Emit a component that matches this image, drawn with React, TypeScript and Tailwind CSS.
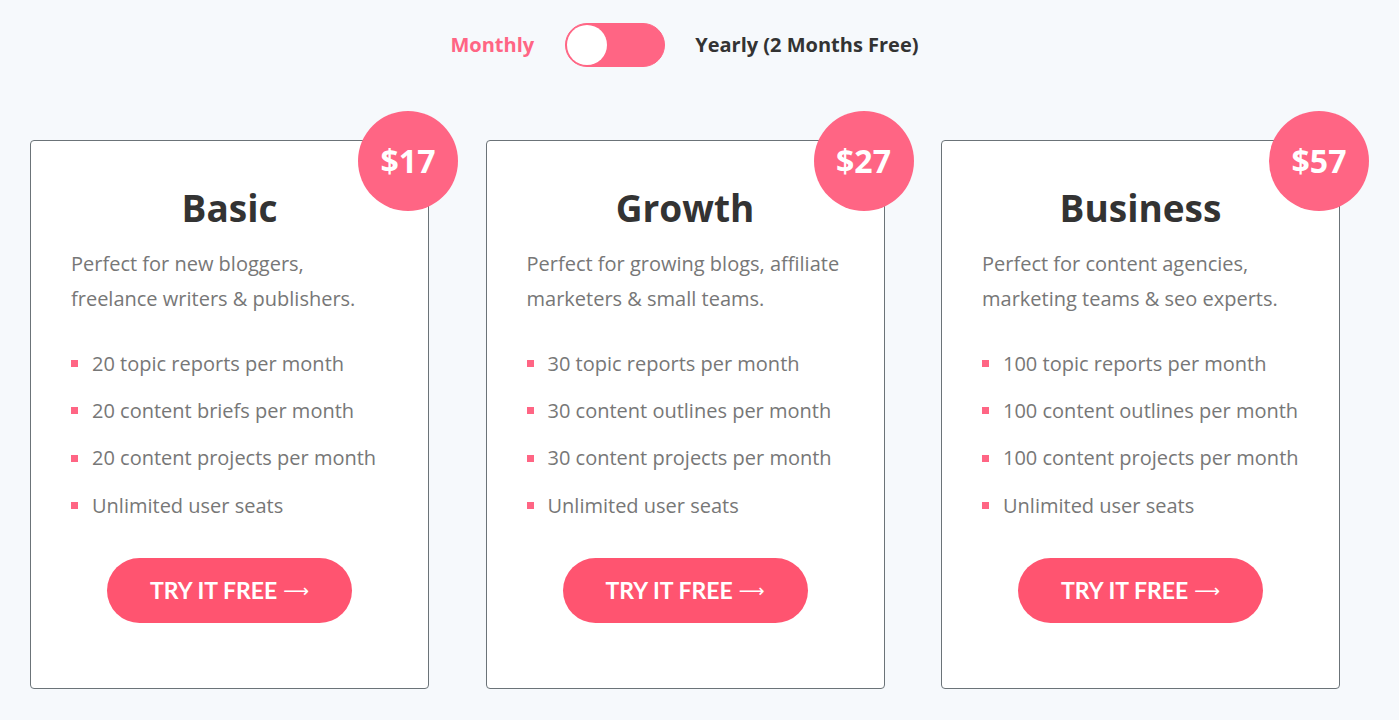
import React, { useState } from "react";

const PLANS = [
  {
    name: "Basic",
    price: "$17",
    desc: ["Perfect for new bloggers,", "freelance writers & publishers."],
    features: [
      "20 topic reports per month",
      "20 content briefs per month",
      "20 content projects per month",
      "Unlimited user seats",
    ],
  },
  {
    name: "Growth",
    price: "$27",
    desc: ["Perfect for growing blogs, affiliate", "marketers & small teams."],
    features: [
      "30 topic reports per month",
      "30 content outlines per month",
      "30 content projects per month",
      "Unlimited user seats",
    ],
  },
  {
    name: "Business",
    price: "$57",
    desc: ["Perfect for content agencies,", "marketing teams & seo experts."],
    features: [
      "100 topic reports per month",
      "100 content outlines per month",
      "100 content projects per month",
      "Unlimited user seats",
    ],
  },
];

function PlanCard({ plan }: { plan: (typeof PLANS)[number] }) {
  return (
    <div className="relative h-[549px] w-[399px] shrink-0 rounded-[4px] border border-[#6b7378] bg-white">
      <div className="absolute -right-[30px] -top-[30px] flex h-[100px] w-[100px] items-center justify-center rounded-full bg-[#ff6584] text-[32px] font-bold text-white">
        {plan.price}
      </div>
      <h2 className="mt-[39px] text-center text-[37px] font-bold leading-[56px] text-[#333]">
        {plan.name}
      </h2>
      <p className="mt-[10px] px-[40px] text-[20px] leading-[35px] text-[#777]">
        {plan.desc[0]}
        <br />
        {plan.desc[1]}
      </p>
      <ul className="mt-[24px] px-[40px]">
        {plan.features.map((f) => (
          <li key={f} className="flex h-[47.3px] items-center text-[20px] text-[#777]">
            <span className="mr-[14px] h-[7px] w-[7px] shrink-0 bg-[#ff6584]" />
            {f}
          </li>
        ))}
      </ul>
      <div className="mt-[29px] flex justify-center">
        <button className="flex h-[65px] w-[245px] items-center justify-center rounded-full bg-[#ff5470] font-['Lato',sans-serif] text-[23px] font-bold text-white">
          TRY IT FREE
          <span className="ml-[6px] font-['DejaVu_Sans',sans-serif] text-[18px] font-normal">⟶</span>
        </button>
      </div>
    </div>
  );
}

export default function App() {
  const [yearly, setYearly] = useState(false);
  return (
    <div className="min-h-[720px] bg-[#f6f9fc] font-['Open_Sans',sans-serif]">
      <div className="flex items-center justify-center pr-[30px] pt-[23px]">
        <span className={`text-[20px] font-bold ${yearly ? "text-[#333]" : "text-[#ff6584]"}`}>
          Monthly
        </span>
        <button
          onClick={() => setYearly(!yearly)}
          className={`ml-[31px] flex h-[44px] w-[100px] items-center rounded-full border border-[#ff6584] bg-[#ff6584] p-[1px] ${yearly ? "justify-end" : "justify-start"}`}
        >
          <span className="h-[40px] w-[40px] rounded-full bg-white" />
        </button>
        <span className={`ml-[30px] text-[20px] font-bold ${yearly ? "text-[#ff6584]" : "text-[#333]"}`}>
          Yearly (2 Months Free)
        </span>
      </div>
      <div className="mt-[73px] flex gap-[56.5px] pl-[30px]">
        {PLANS.map((p) => (
          <PlanCard key={p.name} plan={p} />
        ))}
      </div>
    </div>
  );
}
